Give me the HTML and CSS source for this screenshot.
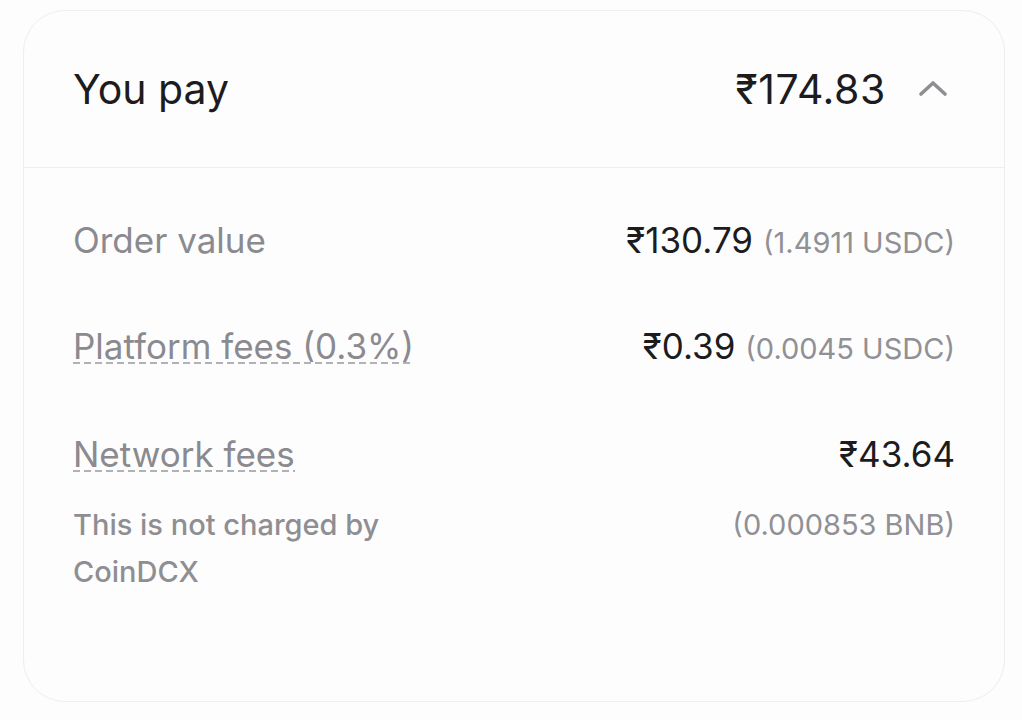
FILE: index.html
```html
<!DOCTYPE html>
<html lang="en">
<head>
    <meta charset="UTF-8">
    <meta name="viewport" content="width=device-width, initial-scale=1.0">
    <title>You pay</title>
    <link rel="stylesheet" href="styles.css">
</head>
<body>

    <div class="card">
        <div class="card-head">
            <span class="head-label">You pay</span>
            <div class="head-total">
                <span class="total">₹174.83</span>
                <svg class="chevron" width="30" height="18" viewBox="0 0 30 18">
                    <polyline points="3,15 15,4 27,15" fill="none" stroke="#8e8e93" stroke-width="3.6" stroke-linecap="round" stroke-linejoin="round" />
                </svg>
            </div>
        </div>

        <div class="card-body">
            <div class="row">
                <div class="line">
                    <span class="label">Order value</span>
                    <span class="value">₹130.79 <small>(1.4911 USDC)</small></span>
                </div>
            </div>
            <div class="row">
                <div class="line">
                    <span class="label dashed">Platform fees (0.3%)</span>
                    <span class="value">₹0.39 <small>(0.0045 USDC)</small></span>
                </div>
            </div>
            <div class="row">
                <div class="line">
                    <span class="label dashed">Network fees</span>
                    <span class="value">₹43.64</span>
                </div>
                <div class="sub">
                    <p class="note">This is not charged by<br>CoinDCX</p>
                    <small>(0.000853 BNB)</small>
                </div>
            </div>
        </div>
    </div>

</body>
</html>
```

FILE: styles.css
```css
body {
    font-family: 'Inter', 'Noto Sans', sans-serif;
    margin: 0;
    padding: 10px 17px 0 23px;
    background: #fdfdfe;
    color: #1c1c1e;
}

.card {
    height: 692px;
    border: 1.5px solid #eeeef1;
    border-radius: 42px;
    background: #fdfdfe;
    box-sizing: border-box;
}

.card-head {
    display: flex;
    justify-content: space-between;
    align-items: center;
    height: 156px;
    padding: 0 56px 0 49px;
    border-bottom: 1.5px solid #efeff2;
    font-size: 41px;
}

.total {
    letter-spacing: 0.6px;
}

.head-total {
    display: flex;
    align-items: center;
    gap: 32px;
}

.chevron {
    display: block;
    margin-top: -2px;
}

.card-body {
    padding: 48px 49px 0 49px;
}

.row {
    margin-bottom: 58px;
}

.row + .row + .row {
    padding-top: 2px;
}

.line {
    display: flex;
    justify-content: space-between;
    align-items: center;
    height: 48px;
}

.label {
    font-size: 35px;
    line-height: 1;
    color: #8a8a8f;
}

.dashed {
    background-image: linear-gradient(90deg, #b2b2b6 0 7px, transparent 7px 11px);
    background-size: 11px 2px;
    background-repeat: repeat-x;
    background-position: 0 100%;
}

.value {
    font-size: 35px;
    color: #1c1c1e;
}

small {
    font-size: 29px;
    color: #909095;
}

.sub {
    display: flex;
    justify-content: space-between;
    align-items: flex-start;
    margin-top: 23px;
}

.sub small {
    line-height: 47px;
}

.note {
    margin: 0;
    font-size: 29px;
    font-weight: 500;
    line-height: 47px;
    color: #8e8e93;
}
```
